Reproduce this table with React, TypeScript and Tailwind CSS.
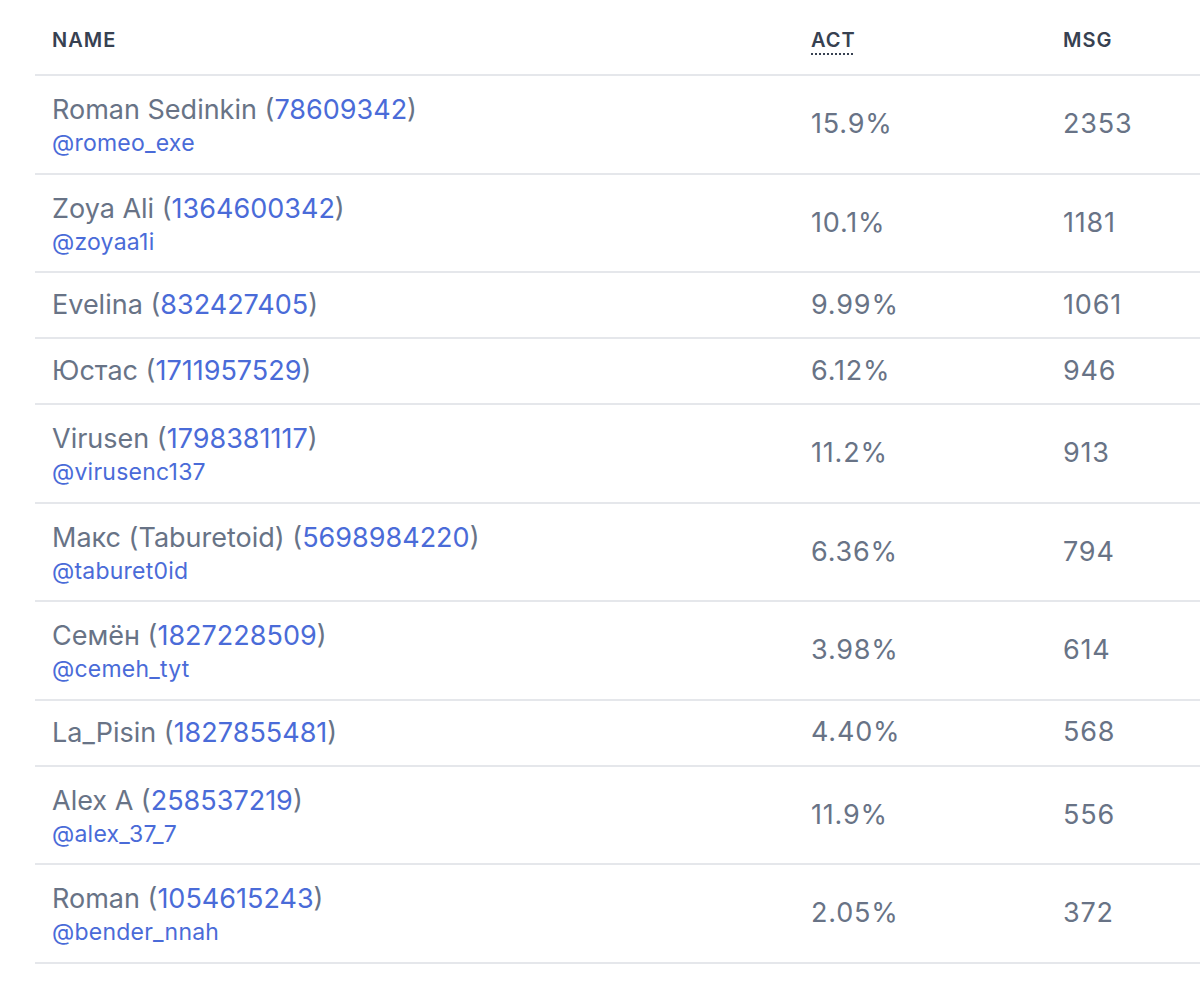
const rows = [
  { name: "Roman Sedinkin", id: "78609342", handle: "romeo_exe", act: "15.9%", msg: "2353" },
  { name: "Zoya Ali", id: "1364600342", handle: "zoyaa1i", act: "10.1%", msg: "1181" },
  { name: "Evelina", id: "832427405", handle: "", act: "9.99%", msg: "1061" },
  { name: "Юстас", id: "1711957529", handle: "", act: "6.12%", msg: "946" },
  { name: "Virusen", id: "1798381117", handle: "virusenc137", act: "11.2%", msg: "913" },
  { name: "Макс (Taburetoid)", id: "5698984220", handle: "taburet0id", act: "6.36%", msg: "794" },
  { name: "Семён", id: "1827228509", handle: "cemeh_tyt", act: "3.98%", msg: "614" },
  { name: "La_Pisin", id: "1827855481", handle: "", act: "4.40%", msg: "568" },
  { name: "Alex A", id: "258537219", handle: "alex_37_7", act: "11.9%", msg: "556" },
  { name: "Roman", id: "1054615243", handle: "bender_nnah", act: "2.05%", msg: "372" },
];

export default function App() {
  return (
    <div className="min-h-screen bg-white pl-[35px] font-['Inter','Noto_Sans',sans-serif]">
      <table className="w-[1165px] table-fixed border-collapse text-left">
        <thead>
          <tr className="border-b-2 border-[#e5e7eb]">
            <th className="w-[759px] h-[75px] pl-[17px] pt-[6px] text-[20px] font-semibold tracking-[0.05em] text-[#374151]">NAME</th>
            <th className="w-[252px] pl-[17px] pt-[6px] text-[20px] font-semibold tracking-[0.05em] text-[#374151]">
              <abbr title="Activity" className="underline decoration-dotted decoration-[#374151] underline-offset-[6px]">ACT</abbr>
            </th>
            <th className="pl-[17px] pt-[6px] text-[20px] font-semibold tracking-[0.05em] text-[#374151]">MSG</th>
          </tr>
        </thead>
        <tbody>
          {rows.map((r) => (
            <tr key={r.id} className="border-b-2 border-[#e5e7eb]">
              <td className={r.handle ? "pl-[17px] pt-[18px] pb-[11px]" : "pl-[17px] py-[16px]"}>
                <div className="text-[27px] leading-[32px] text-[#687386]">
                  {r.name} (<span className="text-[#4a6bd8]">{r.id}</span>)
                </div>
                {r.handle && (
                  <div className="text-[23px] leading-[35.5px] tracking-[0.01em] text-[#4a6bd8]">@{r.handle}</div>
                )}
              </td>
              <td className="pl-[17px] text-[27px] tracking-[0.03em] text-[#687386]">{r.act}</td>
              <td className="pl-[17px] text-[27px] tracking-[0.03em] text-[#687386]">{r.msg}</td>
            </tr>
          ))}
        </tbody>
      </table>
    </div>
  );
}
